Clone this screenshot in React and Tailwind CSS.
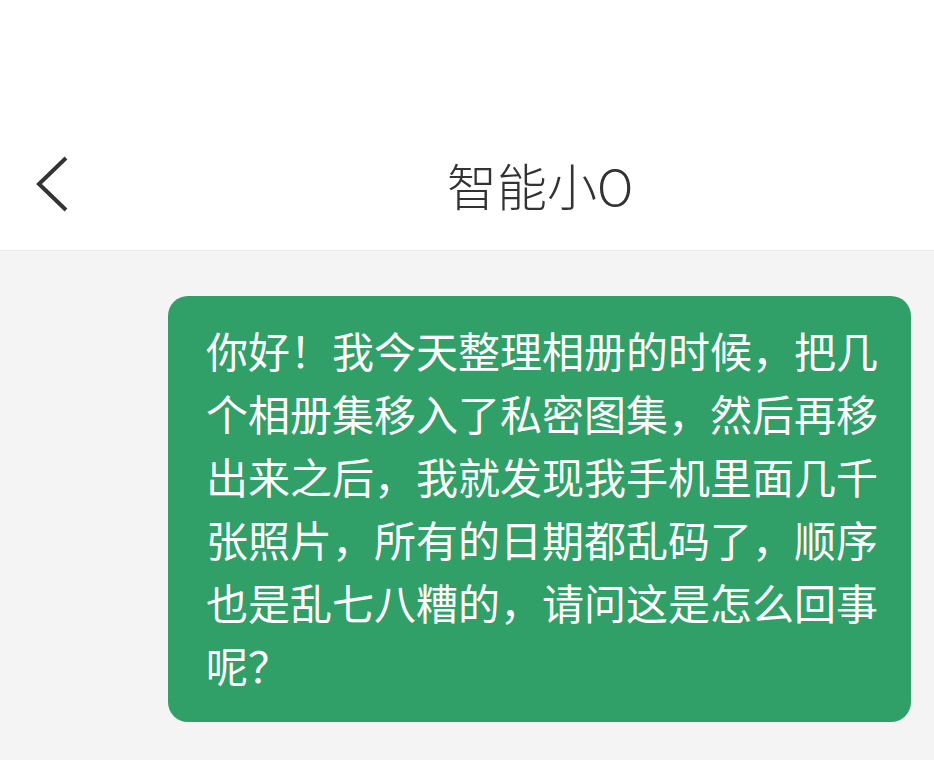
import React from "react";

export default function App() {
  return (
    <div
      className="w-[934px] h-[760px] bg-[#f4f4f4] overflow-hidden"
      style={{ fontFamily: '"Noto Sans", "Noto Sans CJK SC", sans-serif' }}
    >
      <div className="h-[130px] bg-white" />
      <div className="h-[121px] bg-white border-b border-[#e9e9e9] flex items-center">
        <div className="w-[447px] pl-[34px] flex items-center -mt-[12px]">
          <svg width="36" height="58" viewBox="0 0 36 58" fill="none">
            <path
              d="M32 3 L5 29 L32 55"
              stroke="#333333"
              strokeWidth="4"
              strokeLinecap="butt"
              strokeLinejoin="miter"
            />
          </svg>
        </div>
        <div
          className="text-[50px] leading-none text-[#333333] font-light -mt-[12px]"
          style={{ fontFamily: '"Noto Sans CJK SC", sans-serif' }}
        >
          智能小O
        </div>
      </div>
      <div className="pt-[45px] pl-[168px] pr-[23px]">
        <div
          className="bg-[#30a068] rounded-[20px] pl-[38px] pr-[30px] pt-[22px] pb-[26px] text-white text-[42px] leading-[63px] font-normal"
          style={{ fontFamily: '"Noto Sans CJK SC", sans-serif' }}
        >
          你好！我今天整理相册的时候，把几个相册集移入了私密图集，然后再移出来之后，我就发现我手机里面几千张照片，所有的日期都乱码了，顺序也是乱七八糟的，请问这是怎么回事呢？
        </div>
      </div>
    </div>
  );
}
